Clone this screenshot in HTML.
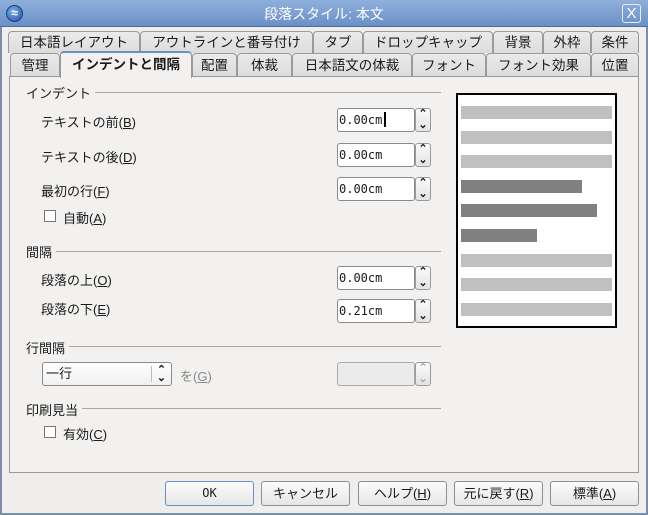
<!DOCTYPE html><html><head><meta charset="utf-8"><style>
*{box-sizing:border-box;margin:0;padding:0}
body{width:648px;height:515px;background:#efeeec;font-family:"Liberation Sans","Noto Sans CJK JP",sans-serif;font-size:13px;color:#1a1a1a;position:relative;overflow:hidden}
.a{position:absolute}
.title{left:0;top:0;width:648px;height:27px;background:linear-gradient(#8fb0dc,#6a90c6);border-bottom:1px solid #4c6d9d}
.frame{left:0;top:27px;width:648px;height:488px;border:2px solid #7a8ea8;border-top:none}
.tab{position:absolute;height:22px;border:1px solid #9a9a9a;border-bottom:none;border-radius:4px 4px 0 0;background:linear-gradient(#eaeaea,#dcdcdc);text-align:center;line-height:21px;font-size:13.5px}
.panel{left:9px;top:76px;width:630px;height:397px;border:1px solid #9a9a9a;background:#f2f1f0}
.lbl{position:absolute;font-size:13px}
.line{position:absolute;height:1px;background:#a8a8a8}
.inp{position:absolute;width:78px;height:24px;border:1px solid #8a8a8a;border-radius:3px;background:#fff;font-family:"DejaVu Sans Mono","Liberation Mono",monospace;font-size:12px;line-height:22px;padding-left:1px}
.spin{position:absolute;width:16px;height:24px;border:1px solid #9a9a9a;border-radius:3px;background:linear-gradient(#fafafa,#e4e4e4);font-size:11px;font-weight:bold;text-align:center;line-height:11px;color:#222}
.cb{position:absolute;width:12px;height:12px;border:1px solid #777;background:#fff}
.btn{position:absolute;top:481px;height:25px;border:1px solid #8f8f8f;border-radius:3px;background:linear-gradient(#fbfbfb,#e6e6e6);text-align:center;line-height:23px;font-size:13px}
.bar{position:absolute;left:3px;height:13px;background:#c0c0c0}
.dk{background:#808080}
u{text-decoration:underline}
</style></head><body>
<div class="a title"></div>
<div class="a" style="left:6px;top:5px;width:17px;height:17px;border-radius:50%;background:radial-gradient(circle at 40% 35%,#7fb0ee,#1d4f9e);border:1px solid #1b3f78;color:#fff;font-size:12px;line-height:15px;text-align:center;font-weight:bold">≈</div>
<div class="a" style="left:0;top:4px;width:648px;text-align:center;color:#fff;font-size:14px">段落スタイル: 本文</div>
<div class="a" style="left:622px;top:4px;width:19px;height:19px;border:1px solid #e8eef8;border-radius:3px;color:#fff;text-align:center;line-height:17px;font-size:15px">X</div>
<div class="a frame"></div>
<div class="tab" style="left:8px;top:31px;width:132px">日本語レイアウト</div>
<div class="tab" style="left:140px;top:31px;width:173px">アウトラインと番号付け</div>
<div class="tab" style="left:313px;top:31px;width:50px">タブ</div>
<div class="tab" style="left:363px;top:31px;width:130px">ドロップキャップ</div>
<div class="tab" style="left:493px;top:31px;width:50px">背景</div>
<div class="tab" style="left:543px;top:31px;width:48px">外枠</div>
<div class="tab" style="left:591px;top:31px;width:48px">条件</div>
<div class="tab" style="left:10px;top:53px;width:50px;height:23px;line-height:23px">管理</div>
<div class="tab" style="left:192px;top:53px;width:45px;height:23px;line-height:23px">配置</div>
<div class="tab" style="left:237px;top:53px;width:55px;height:23px;line-height:23px">体裁</div>
<div class="tab" style="left:292px;top:53px;width:120px;height:23px;line-height:23px">日本語文の体裁</div>
<div class="tab" style="left:412px;top:53px;width:74px;height:23px;line-height:23px">フォント</div>
<div class="tab" style="left:486px;top:53px;width:105px;height:23px;line-height:23px">フォント効果</div>
<div class="tab" style="left:591px;top:53px;width:48px;height:23px;line-height:23px">位置</div>
<div class="a panel"></div>
<div class="tab" style="left:60px;top:51px;width:132px;height:27px;background:#f2f1f0;border-top:2px solid #6a90c6;font-weight:bold;line-height:24px;z-index:2">インデントと間隔</div>

<div class="lbl" style="left:26px;top:83px">インデント</div><div class="line" style="left:95px;top:92px;width:346px"></div>
<div class="lbl" style="left:41px;top:112px">テキストの前(<u>B</u>)</div>
<div class="lbl" style="left:41px;top:147px">テキストの後(<u>D</u>)</div>
<div class="lbl" style="left:41px;top:181px">最初の行(<u>F</u>)</div>
<div class="cb" style="left:44px;top:210px"></div><div class="lbl" style="left:63px;top:208px">自動(<u>A</u>)</div>
<div class="inp" style="left:337px;top:108px">0.00cm<span style="display:inline-block;width:2px;height:15px;background:#000;vertical-align:-3px;margin-left:2px"></span></div><div class="spin" style="left:415px;top:108px">⌃<br>⌄</div>
<div class="inp" style="left:337px;top:143px">0.00cm</div><div class="spin" style="left:415px;top:143px">⌃<br>⌄</div>
<div class="inp" style="left:337px;top:177px">0.00cm</div><div class="spin" style="left:415px;top:177px">⌃<br>⌄</div>

<div class="lbl" style="left:26px;top:242px">間隔</div><div class="line" style="left:56px;top:251px;width:385px"></div>
<div class="lbl" style="left:41px;top:270px">段落の上(<u>O</u>)</div>
<div class="lbl" style="left:41px;top:299px">段落の下(<u>E</u>)</div>
<div class="inp" style="left:337px;top:266px">0.00cm</div><div class="spin" style="left:415px;top:266px">⌃<br>⌄</div>
<div class="inp" style="left:337px;top:299px">0.21cm</div><div class="spin" style="left:415px;top:299px">⌃<br>⌄</div>

<div class="lbl" style="left:26px;top:338px">行間隔</div><div class="line" style="left:69px;top:346px;width:372px"></div>
<div class="a" style="left:42px;top:362px;width:130px;height:24px;border:1px solid #8a8a8a;border-radius:3px;background:linear-gradient(#fff,#f0f0f0);padding-left:3px;line-height:22px">一行<span style="position:absolute;left:108px;top:3px;height:16px;border-left:1px solid #bbb;width:20px;text-align:center;font-size:11px;font-weight:bold;line-height:8px">⌃<br>⌄</span></div>
<div class="lbl" style="left:180px;top:366px;color:#888">を(<u>G</u>)</div>
<div class="a" style="left:337px;top:362px;width:78px;height:24px;border:1px solid #aaa;border-radius:3px;background:#ebebeb"></div><div class="spin" style="left:415px;top:362px;color:#aaa">⌃<br>⌄</div>

<div class="lbl" style="left:26px;top:400px">印刷見当</div><div class="line" style="left:82px;top:408px;width:359px"></div>
<div class="cb" style="left:44px;top:426px"></div><div class="lbl" style="left:63px;top:424px">有効(<u>C</u>)</div>

<div class="a" style="left:456px;top:93px;width:161px;height:235px;border:2px solid #000;background:#fff">
<div class="bar" style="top:11px;width:151px"></div>
<div class="bar" style="top:36px;width:151px"></div>
<div class="bar" style="top:60px;width:151px"></div>
<div class="bar dk" style="top:85px;width:121px"></div>
<div class="bar dk" style="top:109px;width:136px"></div>
<div class="bar dk" style="top:134px;width:76px"></div>
<div class="bar" style="top:159px;width:151px"></div>
<div class="bar" style="top:183px;width:151px"></div>
<div class="bar" style="top:208px;width:151px"></div>
</div>

<div class="btn" style="left:165px;width:89px;border-color:#6a90c6;font-family:'DejaVu Sans Mono',monospace;font-size:12px">OK</div>
<div class="btn" style="left:261px;width:89px">キャンセル</div>
<div class="btn" style="left:358px;width:89px">ヘルプ(<u>H</u>)</div>
<div class="btn" style="left:454px;width:89px">元に戻す(<u>R</u>)</div>
<div class="btn" style="left:550px;width:89px">標準(<u>A</u>)</div>
</body></html>
